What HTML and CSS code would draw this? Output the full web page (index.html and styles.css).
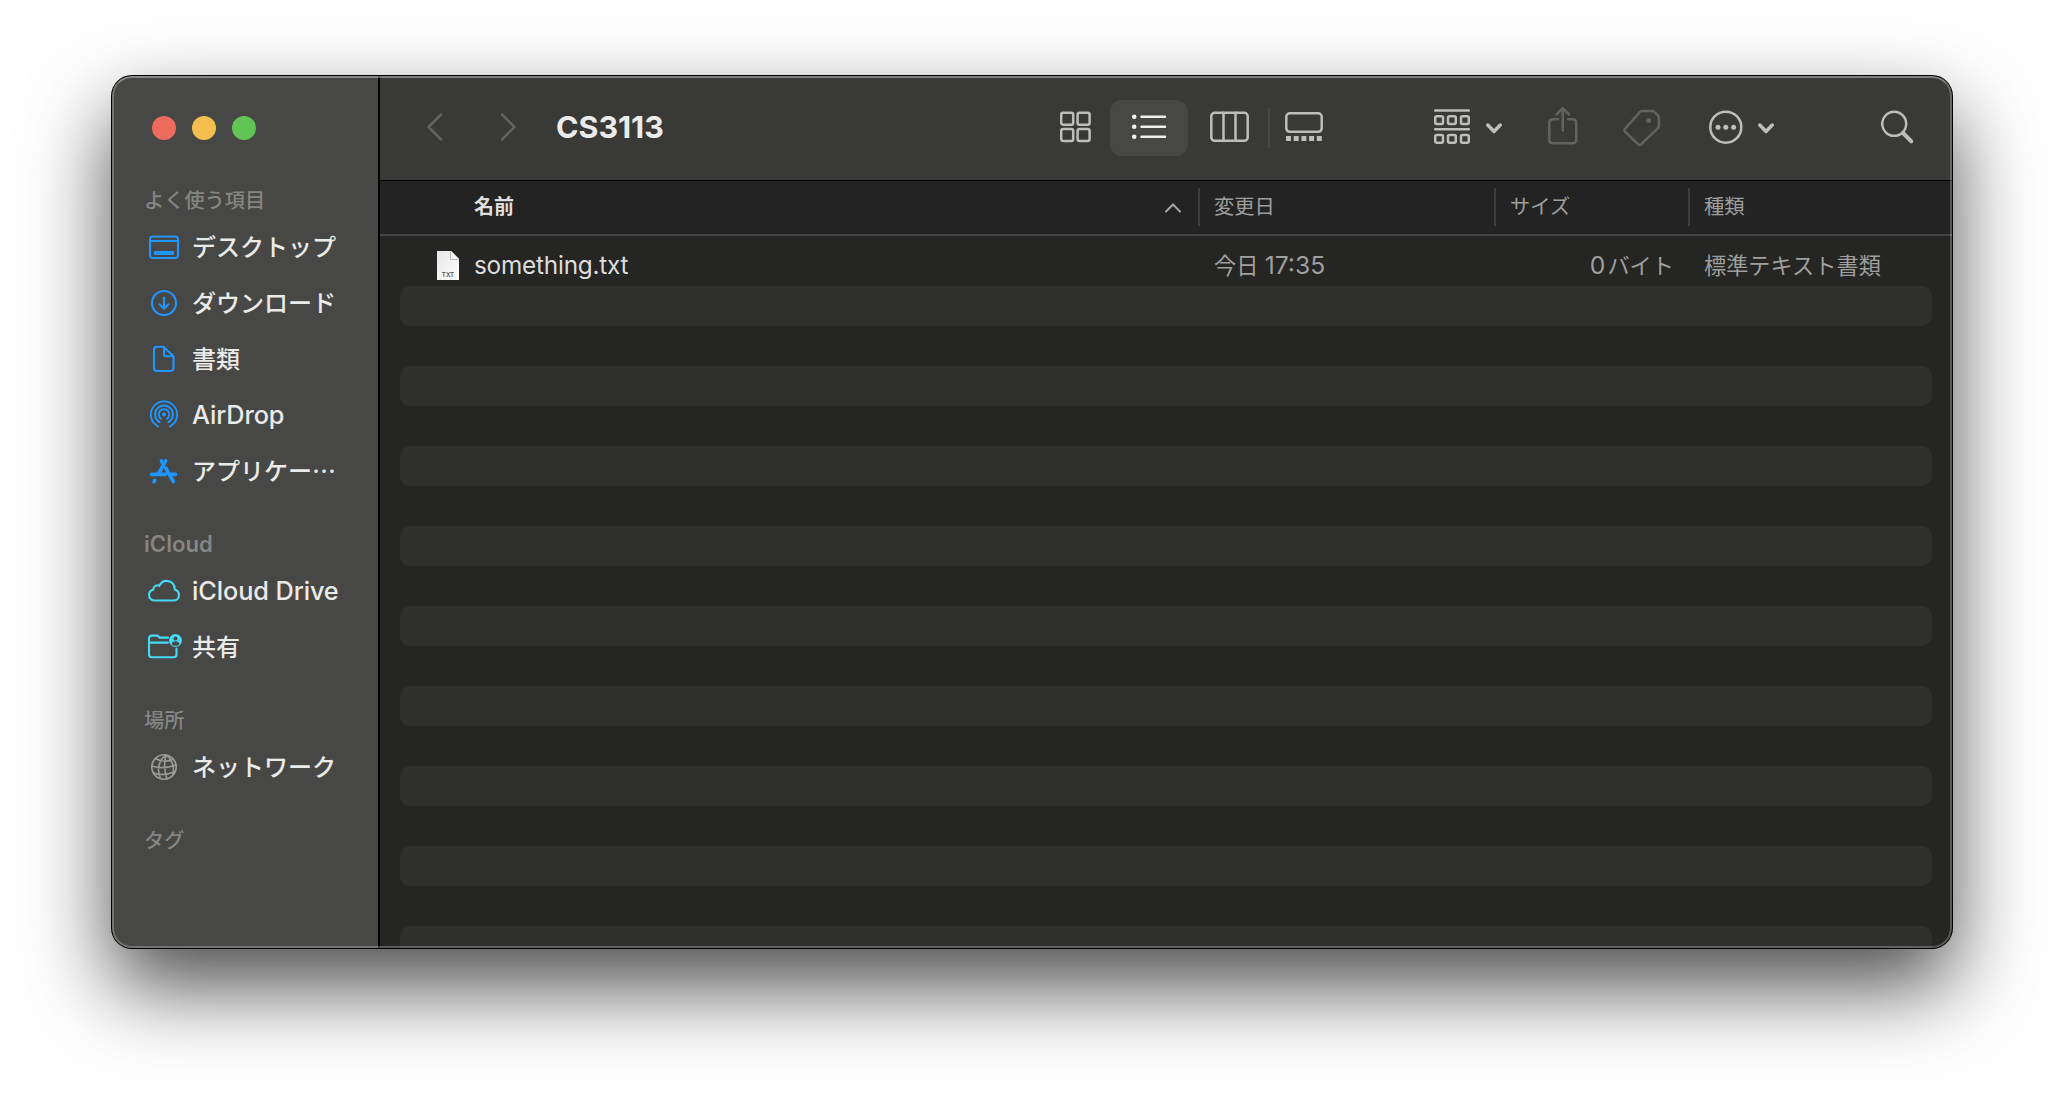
FILE: index.html
```html
<!DOCTYPE html>
<html lang="ja">
<head>
<meta charset="utf-8">
<title>CS3113</title>
<link rel="stylesheet" href="styles.css">
</head>
<body>
<div class="window">
  <aside class="sidebar">
    <div class="lights"><span class="light red"></span><span class="light yellow"></span><span class="light green"></span></div>
    <section class="group">
      <h2 class="heading">よく使う項目</h2>
      <div class="item">
        <svg class="icon" viewBox="0 0 40 40"><rect x="6" y="9.5" width="28" height="21.5" rx="3"/><path d="M6 14h28"/><rect class="solid" x="10" y="24" width="20" height="4" rx="1"/></svg>
        <span class="label">デスクトップ</span>
      </div>
      <div class="item">
        <svg class="icon" viewBox="0 0 40 40"><circle cx="20" cy="20" r="12"/><path d="M20 14.500v11M15.500 21.300l4.500 4.500 4.500-4.500"/></svg>
        <span class="label">ダウンロード</span>
      </div>
      <div class="item">
        <svg class="icon" viewBox="0 0 40 40"><path d="M19.500 7.700h-6.500q-3 0-3 3v18.300q0 3 3 3h13.500q3 0 3-3v-11.700zM20 8v7q0 2.300 2.300 2.300h7"/></svg>
        <span class="label">書類</span>
      </div>
      <div class="item">
        <svg class="icon air" viewBox="0 0 40 40"><circle class="solid" cx="20" cy="19.500" r="2"/><path d="M17 23.700a5.200 5.200 0 1 1 6 0M15.600 27.200a8.900 8.900 0 1 1 8.800 0M14 31.300a13.200 13.200 0 1 1 12 0"/></svg>
        <span class="label latin">AirDrop</span>
      </div>
      <div class="item">
        <svg class="icon apps" viewBox="0 0 40 40"><path d="M21.700 9.800L14.200 23.200M17.400 9.800l2.200 3.400M7.600 23.400h13.800M26.800 23.400h4.600M21.800 17l7.600 13.500M10.800 29.300l-.8 1.300"/></svg>
        <span class="label">アプリケー…</span>
      </div>
    </section>
    <section class="group">
      <h2 class="heading latin-heading">iCloud</h2>
      <div class="item cyan">
        <svg class="icon" viewBox="0 0 40 40"><path d="M11 29.500c-3.500 0-6-2.400-6-5.500 0-2.700 1.700-4.600 4.200-5.200-.2-3.200 3.200-5.600 6.200-4 1.600-3.200 4-4.900 7.300-4.900 4.700 0 8.200 3.600 8.100 8.600 2.600.9 4.200 2.900 4.200 5.400 0 3.200-2.500 5.600-5.800 5.600z"/></svg>
        <span class="label latin">iCloud Drive</span>
      </div>
      <div class="item cyan">
        <svg class="icon" viewBox="0 0 40 40"><path d="M24 10.600h-8.300l-2.200-2h-5.500q-3 0-3 3v15.700q0 3 3 3h21.500q3 0 3-3v-5.800M5 15.600h19"/><circle class="solid" cx="31.500" cy="13.500" r="6.500"/><circle class="cut" cx="31.500" cy="11.400" r="2"/><path class="cut" d="M27.700 17.200c.5-3.800 7.100-3.800 7.600 0-2 2-5.600 2-7.600 0z"/></svg>
        <span class="label">共有</span>
      </div>
    </section>
    <section class="group">
      <h2 class="heading">場所</h2>
      <div class="item gray">
        <svg class="icon" viewBox="0 0 40 40"><circle cx="20" cy="20" r="12.200"/><path d="M22.500 8c-8 5-10 15-6 23.500M22.500 8c-3 7-2 17 .5 24M22.500 8c6 5 8.500 13 6 20.500M11.500 11.500c5.500 3.500 12.500 3.500 17.500.500M8 19c7 2.500 17 1.500 24-1M9.500 26c7 2.500 15 1.500 21.500-1.500"/></svg>
        <span class="label">ネットワーク</span>
      </div>
    </section>
    <section class="group">
      <h2 class="heading">タグ</h2>
    </section>
  </aside>
  <main class="content">
    <header class="toolbar">
      <svg class="tool dim back" viewBox="0 0 20 48" width="20"><path d="M16 11.500L3.500 24 16 36.500"/></svg>
      <svg class="tool dim forward" viewBox="0 0 20 48" width="20"><path d="M4 11.500L16.500 24 4 36.500"/></svg>
      <h1 class="title">CS3113</h1>
      <div class="views">
        <svg class="tool grid" viewBox="0 0 32 48" width="32"><rect x="1.200" y="9.700" width="12" height="12" rx="2"/><rect x="17.600" y="9.700" width="12" height="12" rx="2"/><rect x="1.200" y="26" width="12" height="12" rx="2"/><rect x="17.600" y="26" width="12" height="12" rx="2"/></svg>
        <div class="selected"><svg class="tool list" viewBox="0 0 36 48" width="36"><path d="M10.500 13.800h23.500M10.500 23.800h23.500M10.500 33.800h23.500"/><circle cx="3.200" cy="13.800" r="2.300"/><circle cx="3.200" cy="23.800" r="2.300"/><circle cx="3.200" cy="33.800" r="2.300"/></svg></div>
        <svg class="tool columns" viewBox="0 0 40 48" width="40"><rect x="1.300" y="9.800" width="36.400" height="28" rx="3.500"/><path d="M13.500 9.800v28M25.500 9.800v28"/></svg>
        <span class="rule"></span>
        <svg class="tool gallery" viewBox="0 0 38 48" width="38"><rect x="1.300" y="10.300" width="35.400" height="18.500" rx="3.500"/><path class="fill" d="M1 33h5v5h-5zM8.700 33h5v5h-5zM16.400 33h5v5h-5zM24.100 33h5v5h-5zM31.800 33h5v5h-5z"/></svg>
      </div>
      <svg class="tool arrange" viewBox="0 0 36 48" width="36"><path d="M1.200 7.500h33.600M1.200 26.300h33.600"/><rect x="1.200" y="13.300" width="7.800" height="7.800" rx="1.500"/><rect x="14" y="13.300" width="7.800" height="7.800" rx="1.500"/><rect x="27" y="13.300" width="7.800" height="7.800" rx="1.500"/><rect x="1.200" y="32" width="7.800" height="7.800" rx="1.500"/><rect x="14" y="32" width="7.800" height="7.800" rx="1.500"/><rect x="27" y="32" width="7.800" height="7.800" rx="1.500"/></svg>
      <svg class="tool caret" viewBox="0 0 16 48" width="16"><path d="M1.800 22l6.200 6.500 6.200-6.500"/></svg>
      <svg class="tool dim share" viewBox="0 0 30 48" width="30"><path d="M10 16.200H5q-3.700 0-3.700 3.500v17q0 3.500 3.700 3.500h19.500q3.700 0 3.700-3.500v-17q0-3.500-3.700-3.500H20M14.800 27.500V6M8.500 11.500L14.800 5.200l6.300 6.300"/></svg>
      <svg class="tool dim tag" viewBox="0 0 38 48" width="38"><path d="M19.500 8h9.500q1.500 0 2.600 1.100l3.300 3.400q1 1 1 2.500v7.500q0 1.700-1.200 2.900L18.400 41.200q-1.700 1.700-3.400 0L2.200 28.800q-1.600-1.600 0-3.200L16.600 9.200q1.200-1.200 2.900-1.200z"/><circle class="fill" cx="25.700" cy="17.600" r="2.500"/></svg>
      <svg class="tool more" viewBox="0 0 34 48" width="34"><circle cx="16.800" cy="24.200" r="15.500"/><circle class="fill" cx="9" cy="24.200" r="2.500"/><circle class="fill" cx="16.800" cy="24.200" r="2.500"/><circle class="fill" cx="24.600" cy="24.200" r="2.500"/></svg>
      <svg class="tool caret second" viewBox="0 0 16 48" width="16"><path d="M1.800 22l6.200 6.500 6.200-6.500"/></svg>
      <svg class="tool search" viewBox="0 0 34 48" width="34"><circle cx="13.200" cy="20.800" r="12"/><path class="handle" d="M22 30l8.300 8.300"/></svg>
    </header>
    <div class="columns-head">
      <div class="cell name">名前<svg class="sort" viewBox="0 0 16 10"><path d="M1 8.500l7-7 7 7"/></svg></div>
      <div class="cell">変更日</div>
      <div class="cell">サイズ</div>
      <div class="cell last">種類</div>
    </div>
    <div class="rows">
      <div class="row file">
        <div class="name-cell">
          <svg class="doc" viewBox="0 0 26 34"><defs><linearGradient id="paper" x1="0" y1="0" x2="1" y2="1"><stop offset="0" stop-color="#e6e6e6"/><stop offset="1" stop-color="#fff"/></linearGradient></defs><path fill="url(#paper)" d="M2 2h14l8 8v21H2z"/><path fill="#bdbdbd" d="M15 3l1-1v8h8l-1 1h-8z"/><path fill="#f7f7f7" d="M16 2l8 8h-8z"/><text x="13" y="28" text-anchor="middle">TXT</text></svg>
          <span class="filename">something.txt</span>
        </div>
        <div class="meta">今日 <span class="time">17:35</span></div>
        <div class="meta size"><span class="zero">0</span>バイト</div>
        <div class="meta">標準テキスト書類</div>
      </div>
      <div class="row stripe"></div><div class="row"></div>
      <div class="row stripe"></div><div class="row"></div>
      <div class="row stripe"></div><div class="row"></div>
      <div class="row stripe"></div><div class="row"></div>
      <div class="row stripe"></div><div class="row"></div>
      <div class="row stripe"></div><div class="row"></div>
      <div class="row stripe"></div><div class="row"></div>
      <div class="row stripe"></div><div class="row"></div>
      <div class="row stripe"></div>
    </div>
  </main>
</div>
</body>
</html>
```
FILE: styles.css
```css
* { box-sizing: border-box; }
body {
  margin: 0;
  height: 1096px;
  padding: 76px 112px;
  background: #fff;
  overflow: hidden;
  font-family: Inter, "Noto Sans CJK JP", sans-serif;
}
.window {
  position: relative;
  display: flex;
  width: 1840px;
  height: 872px;
  border-radius: 20px;
  overflow: hidden;
  background: #252524;
  box-shadow: 0 0 0 1px #000, 0 38px 84px rgba(0, 0, 0, .71);
}
/* Light rim that runs over the sidebar and the content. */
.window::after {
  content: "";
  position: absolute;
  inset: 0;
  border: 2px solid rgba(255, 255, 255, .24);
  border-top-color: rgba(255, 255, 255, .36);
  border-radius: 20px;
}
.sidebar {
  width: 268px;
  height: 872px;
  flex: none;
  background: #474745;
  border-right: 2px solid #000;
}
.lights { display: flex; gap: 16px; padding: 40px 0 0 40px; height: 105px; }
.light { width: 24px; height: 24px; border-radius: 50%; }
.red { background: #ed6a5e; }
.yellow { background: #f5bf4f; }
.green { background: #61c554; }
.group { margin-bottom: 26px; }
.heading {
  margin: 0;
  padding-left: 32px;
  height: 38px;
  line-height: 40px;
  font-size: 20.200px;
  font-weight: 500;
  color: #858583;
}
.latin-heading { line-height: 38px; font-size: 22.200px; font-weight: 600; }
.item { display: flex; align-items: center; gap: 8px; height: 56px; padding-left: 32px; color: #1f96ff; }
.item.cyan { color: #45d9f5; }
.item.gray { color: #9a9a98; }
.icon { width: 40px; height: 40px; flex: none; fill: none; stroke: currentColor; stroke-width: 2.100; stroke-linecap: round; stroke-linejoin: round; }
.icon .solid { fill: currentColor; stroke: none; }
.icon .cut { fill: #474745; stroke: none; }
.gray .icon { stroke-width: 1.600; }
.air { stroke-width: 1.900; }
.apps { stroke-width: 3.600; }
.label { margin-bottom: 2px; font-family: "Noto Sans CJK JP", sans-serif; font-size: 24px; line-height: 36px; font-weight: 500; color: #eaeae9; white-space: nowrap; }
.label.latin { margin-bottom: 0; font-family: Inter, sans-serif; font-size: 25.300px; font-weight: 500; letter-spacing: -.1px; }
.content { flex: 1; min-width: 0; }
.toolbar {
  display: flex;
  align-items: flex-start;
  height: 105px;
  padding: 27px 0 0 45px;
  background: #393937;
  border-bottom: 1px solid #000;
}
.tool { height: 48px; flex: none; fill: none; stroke: #bdbdbb; stroke-width: 2.500; stroke-linecap: round; stroke-linejoin: round; }
.tool.dim { stroke: #62625f; }
.tool .fill { fill: #bdbdbb; stroke: none; }
.tool.dim .fill { fill: #62625f; }
.forward { margin-left: 53px; }
.title { margin: 0 0 0 38px; width: 140px; font-size: 30.400px; line-height: 49px; font-weight: 700; color: #ebebea; }
.views { display: flex; margin-left: 364px; }
.selected { margin: -3px 0 0 18px; width: 78px; height: 56px; border-radius: 12px; padding: 3px 0 0 21px; background: #474745; }
.tool.list { stroke: #f0f0ef; }
.tool.list circle { fill: #f0f0ef; stroke: none; }
.columns { margin-left: 22px; }
.rule { width: 2px; height: 40px; margin: 5px 15px 0 18px; background: #484846; }
.arrange { margin-left: 111px; }
.caret { margin-left: 16px; stroke-width: 3.500; }
.caret.second { margin-left: 15px; }
.share { margin-left: 46px; }
.tag { margin-left: 45px; }
.more { margin-left: 48px; }
.search { margin-left: 107px; }
.search .handle { stroke-width: 4; }
.columns-head, .file { display: grid; grid-template-columns: 820px 296px 194px 1fr; }
.columns-head { height: 55px; border-bottom: 2px solid #434343; background: #232323; }
.cell {
  height: 38px;
  margin-top: 7px;
  padding-left: 14px;
  border-right: 2px solid #3d3d3d;
  font-size: 20.300px;
  line-height: 38px;
  color: #9f9f9f;
}
.cell.name { display: flex; justify-content: space-between; padding: 0 17px 0 94px; font-size: 20px; font-weight: 700; color: #dededd; }
.cell.last { border-right: 0; }
.sort { width: 16px; height: 10px; margin-top: 15px; fill: none; stroke: #a5a5a5; stroke-width: 2; stroke-linecap: round; }
.rows { height: 712px; padding: 10px 20px 0; overflow: hidden; }
.row { height: 40px; border-radius: 10px; }
.stripe { background: #2f2f2e; }
.file { margin: 0 -20px; line-height: 39px; }
.name-cell { display: flex; padding-left: 55px; }
.doc { width: 26px; height: 34px; margin: 3px 13px 0 0; }
.doc text { font: 600 6.200px Inter, sans-serif; fill: #555; }
.filename { font-size: 24.300px; letter-spacing: -.2px; color: #dededd; }
.meta { padding-left: 14px; font-size: 22.200px; color: #9f9f9e; white-space: nowrap; }
.time, .zero { font-size: 24.700px; }
.zero { margin-right: 2px; }
.size { padding: 0 16px 0 0; text-align: right; }
```
